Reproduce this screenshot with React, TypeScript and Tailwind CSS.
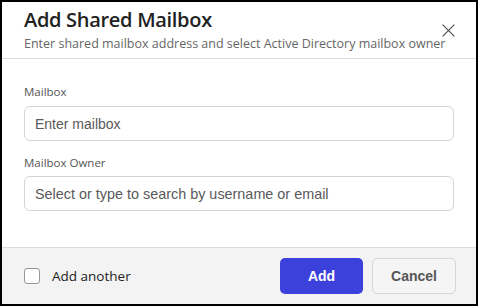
import { useState } from 'react'

export default function App() {
  const [another, setAnother] = useState(false)

  return (
    <div className="w-[478px] h-[306px] border-2 border-black bg-white flex flex-col overflow-hidden font-['Open_Sans',sans-serif]">
      {/* header */}
      <div className="h-[57px] border-b border-[#dcdcdc] flex items-start pl-[22px] pr-[20px] shrink-0">
        <div className="flex-1 min-w-0 pt-[5px]">
          <h1 className="text-[20px] leading-[26px] font-semibold text-[#222] tracking-[-0.3px]">Add Shared Mailbox</h1>
          <p className="text-[12.5px] leading-[16px] text-[#666] mt-[3px] whitespace-nowrap">
            Enter shared mailbox address and select Active Directory mailbox owner
          </p>
        </div>
        <button className="mt-[20px] w-[16px] h-[16px] flex items-center justify-center text-[#555]">
          <svg width="15" height="15" viewBox="0 0 14 14" fill="none" stroke="currentColor" strokeWidth="1.2">
            <path d="M1.5 1.5 L12.5 12.5 M12.5 1.5 L1.5 12.5" />
          </svg>
        </button>
      </div>

      {/* body */}
      <div className="flex-1 px-[22px] pt-[25px]">
        <label className="block text-[11.5px] leading-[16px] text-[#555]">Mailbox</label>
        <input
          placeholder="Enter mailbox"
          className="block mt-[6px] w-full h-[35px] rounded-[6px] border border-[#d4d4d4] px-[10px] text-[14px] font-['Liberation_Sans',sans-serif] placeholder:text-[#595959] outline-none"
        />
        <label className="block mt-[14px] text-[11.5px] leading-[16px] text-[#555]">Mailbox Owner</label>
        <input
          placeholder="Select or type to search by username or email"
          className="block mt-[5px] w-full h-[35px] rounded-[6px] border border-[#d4d4d4] px-[10px] text-[14.4px] font-['Liberation_Sans',sans-serif] placeholder:text-[#595959] outline-none"
        />
      </div>

      {/* footer */}
      <div className="h-[57px] shrink-0 border-t border-[#dcdcdc] bg-[#f3f3f3] flex items-center pl-[22px] pr-[20px]">
        <label className="flex items-center gap-[12px] flex-1 cursor-pointer">
          <input
            type="checkbox"
            checked={another}
            onChange={(e) => setAnother(e.target.checked)}
            className="appearance-none w-[16px] h-[16px] rounded-[3px] border border-[#999] bg-white"
          />
          <span className="text-[13.5px] text-[#222]">Add another</span>
        </label>
        <button className="w-[83px] h-[36px] rounded-[5px] bg-[#3d41dc] text-white text-[14px] font-bold font-['Liberation_Sans',sans-serif]">
          Add
        </button>
        <button className="ml-[9px] w-[84px] h-[36px] rounded-[5px] border border-[#d6d6d6] bg-[#f5f5f5] text-[#555] text-[14px] font-bold font-['Liberation_Sans',sans-serif]">
          Cancel
        </button>
      </div>
    </div>
  )
}
